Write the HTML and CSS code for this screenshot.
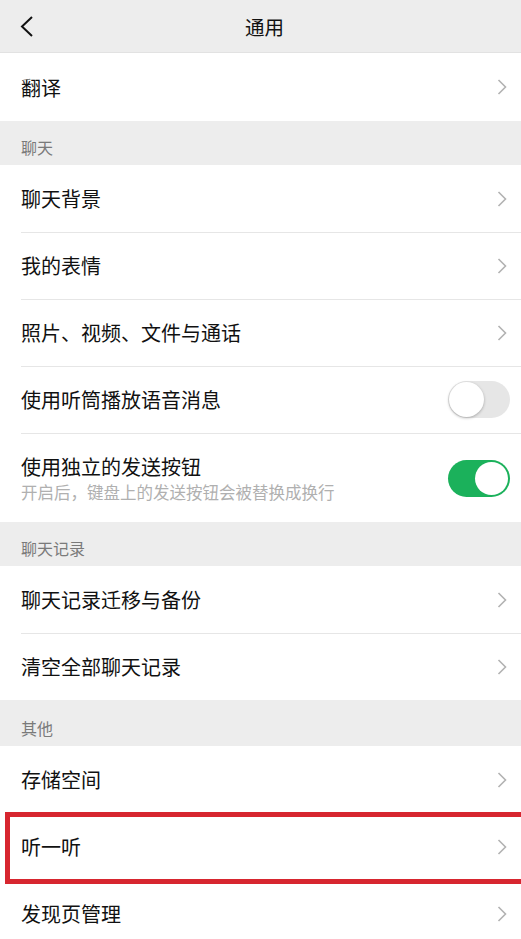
FILE: index.html
```html
<!DOCTYPE html>
<html lang="zh-CN">
<head>
  <meta charset="UTF-8">
  <meta name="viewport" content="width=device-width, initial-scale=1.0">
  <title>通用</title>
  <link rel="stylesheet" href="styles.css">
</head>
<body>
  <div class="page">
    <!-- Top bar -->
    <div class="topbar">
      <svg class="back" width="14" height="22" viewBox="0 0 14 22">
        <polyline points="12,1 2,10.5 12,20" fill="none" stroke="#111" stroke-width="2"/>
      </svg>
      <h1>通用</h1>
    </div>

    <div class="group">
      <div class="row">
        <span class="label">翻译</span>
        <svg class="arrow" width="10" height="16" viewBox="0 0 10 16"><polyline points="1.5,1 8.5,8 1.5,15" fill="none" stroke="#b2b2b2" stroke-width="1.6"/></svg>
      </div>
    </div>

    <div class="section-title">聊天</div>
    <div class="group">
      <div class="row">
        <span class="label">聊天背景</span>
        <svg class="arrow" width="10" height="16" viewBox="0 0 10 16"><polyline points="1.5,1 8.5,8 1.5,15" fill="none" stroke="#b2b2b2" stroke-width="1.6"/></svg>
      </div>
      <div class="row">
        <span class="label">我的表情</span>
        <svg class="arrow" width="10" height="16" viewBox="0 0 10 16"><polyline points="1.5,1 8.5,8 1.5,15" fill="none" stroke="#b2b2b2" stroke-width="1.6"/></svg>
      </div>
      <div class="row">
        <span class="label">照片、视频、文件与通话</span>
        <svg class="arrow" width="10" height="16" viewBox="0 0 10 16"><polyline points="1.5,1 8.5,8 1.5,15" fill="none" stroke="#b2b2b2" stroke-width="1.6"/></svg>
      </div>
      <div class="row">
        <span class="label">使用听筒播放语音消息</span>
        <span class="switch"><span class="knob"></span></span>
      </div>
      <div class="row row-tall">
        <div class="text">
          <span class="label">使用独立的发送按钮</span>
          <span class="hint">开启后，键盘上的发送按钮会被替换成换行</span>
        </div>
        <span class="switch on"><span class="knob"></span></span>
      </div>
    </div>

    <div class="section-title">聊天记录</div>
    <div class="group">
      <div class="row">
        <span class="label">聊天记录迁移与备份</span>
        <svg class="arrow" width="10" height="16" viewBox="0 0 10 16"><polyline points="1.5,1 8.5,8 1.5,15" fill="none" stroke="#b2b2b2" stroke-width="1.6"/></svg>
      </div>
      <div class="row">
        <span class="label">清空全部聊天记录</span>
        <svg class="arrow" width="10" height="16" viewBox="0 0 10 16"><polyline points="1.5,1 8.5,8 1.5,15" fill="none" stroke="#b2b2b2" stroke-width="1.6"/></svg>
      </div>
    </div>

    <div class="section-title section-other">其他</div>
    <div class="group">
      <div class="row">
        <span class="label">存储空间</span>
        <svg class="arrow" width="10" height="16" viewBox="0 0 10 16"><polyline points="1.5,1 8.5,8 1.5,15" fill="none" stroke="#b2b2b2" stroke-width="1.6"/></svg>
      </div>
      <div class="row marked">
        <span class="label">听一听</span>
        <svg class="arrow" width="10" height="16" viewBox="0 0 10 16"><polyline points="1.5,1 8.5,8 1.5,15" fill="none" stroke="#b2b2b2" stroke-width="1.6"/></svg>
        <span class="highlight"></span>
      </div>
      <div class="row">
        <span class="label">发现页管理</span>
        <svg class="arrow" width="10" height="16" viewBox="0 0 10 16"><polyline points="1.5,1 8.5,8 1.5,15" fill="none" stroke="#b2b2b2" stroke-width="1.6"/></svg>
      </div>
    </div>
  </div>
</body>
</html>
```

FILE: styles.css
```css
body {
  margin: 0;
  padding: 0;
  background-color: #ededed;
  font-family: 'Noto Sans CJK SC', 'Noto Sans', sans-serif;
  color: #111;
  overflow: hidden;
}

.page {
  display: flex;
  flex-direction: column;
  width: 521px;
  height: 939px;
  overflow: hidden;
}

.topbar {
  position: relative;
  display: flex;
  align-items: center;
  justify-content: center;
  height: 52px;
  flex-shrink: 0;
  background-color: #ededed;
  border-bottom: 1px solid #e2e2e2;
}

.topbar h1 {
  margin: 0 0 0 8px;
  font-size: 19.5px;
  font-weight: normal;
  color: #111;
}

.topbar .back {
  position: absolute;
  left: 20px;
  top: 16px;
}

.group {
  background-color: #ffffff;
  flex-shrink: 0;
}

.row {
  position: relative;
  display: flex;
  align-items: center;
  justify-content: space-between;
  height: 67px;
  padding: 0 14px 0 21px;
  box-sizing: border-box;
}

.row + .row::before {
  content: '';
  position: absolute;
  top: 0;
  left: 21px;
  right: 0;
  border-top: 1px solid #e6e6e6;
}

.group:nth-child(2) .row {
  height: 68px;
}

.label {
  font-size: 20px;
  color: #111;
}

.row-tall {
  height: 89px;
  padding-top: 2px;
}

.text {
  display: flex;
  flex-direction: column;
}

.text .label {
  line-height: 26px;
}

.hint {
  font-size: 16.5px;
  color: #b0b0b0;
  line-height: 24px;
}

.section-title {
  display: flex;
  align-items: flex-end;
  height: 44px;
  padding: 0 21px 6px;
  box-sizing: border-box;
  flex-shrink: 0;
  font-size: 16px;
  color: #7a7a7a;
}

.section-other {
  height: 46px;
}

.switch {
  position: relative;
  width: 62px;
  height: 37px;
  margin-right: -3px;
  border-radius: 19px;
  background-color: #e6e6e6;
  box-sizing: border-box;
}

.switch .knob {
  position: absolute;
  top: 1px;
  left: 1px;
  width: 35px;
  height: 35px;
  border-radius: 50%;
  background-color: #ffffff;
  box-shadow: 0 1px 3px rgba(0, 0, 0, 0.28);
}

.switch.on {
  background-color: #1bb15b;
}

.switch.on .knob {
  left: auto;
  right: 2px;
  top: 2px;
  width: 33px;
  height: 33px;
  box-shadow: none;
}

.highlight {
  position: absolute;
  z-index: 1;
  top: -1px;
  left: 5px;
  right: -10px;
  bottom: -4px;
  border: 5px solid #d7262f;
}
```
